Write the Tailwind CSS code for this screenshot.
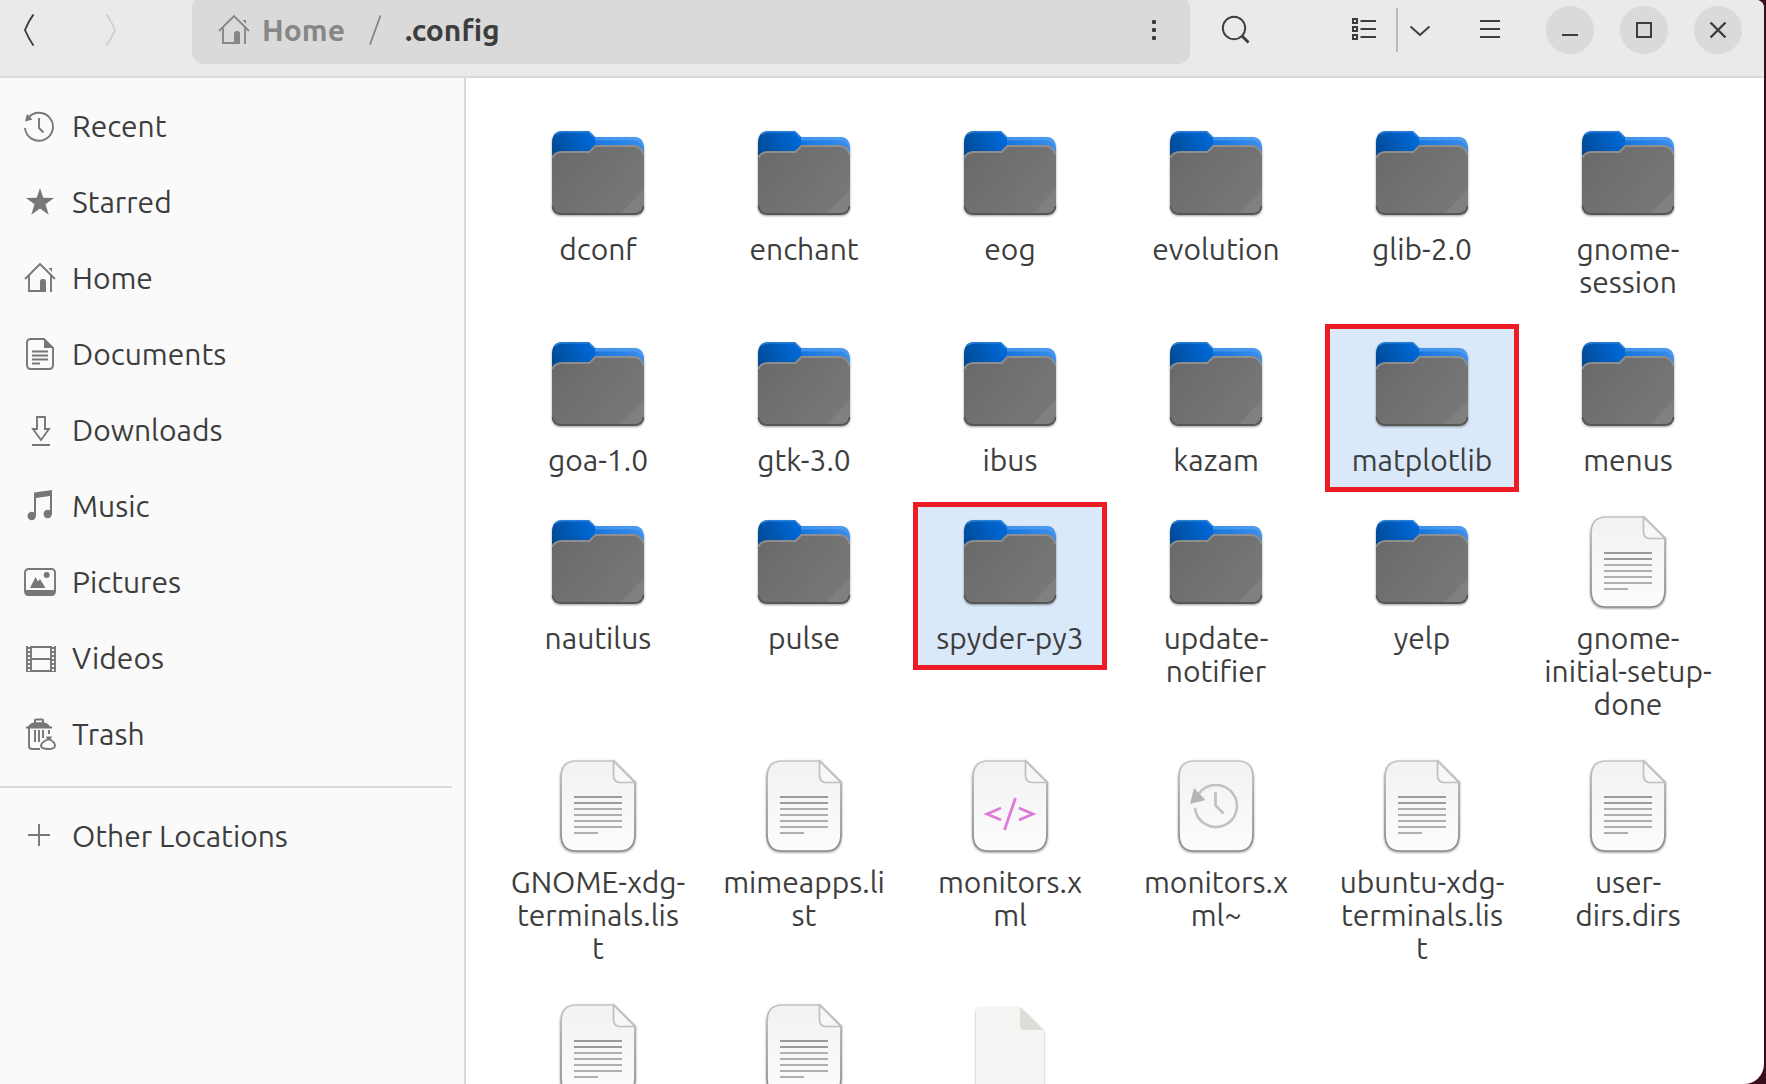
<!DOCTYPE html>
<html lang="en">
<head>
<meta charset="utf-8">
<title>.config</title>
<script src="https://cdn.jsdelivr.net/npm/@tailwindcss/browser@4"></script>
</head>
<body class="h-screen overflow-hidden bg-[#3a0d1a] pr-[2px] font-['Ubuntu','Noto_Sans',sans-serif] text-[30px] text-[#3d3d3d]">

<svg class="absolute h-0 w-0" aria-hidden="true">
  <defs>
    <linearGradient id="front" x1="0" y1="0" x2="1" y2="0.6"><stop offset="0" stop-color="#696969"/><stop offset="1" stop-color="#777777"/></linearGradient>
    <linearGradient id="tab" x1="0" y1="0.6" x2="0.9" y2="0.2"><stop offset="0" stop-color="#004a94"/><stop offset="1" stop-color="#0068d6"/></linearGradient>
    <linearGradient id="rim" x1="0" y1="0" x2="1" y2="0"><stop offset="0.4" stop-color="#1273da"/><stop offset="1" stop-color="#3a8eee"/></linearGradient>
    <linearGradient id="paper" x1="0" y1="0" x2="0" y2="1"><stop offset="0" stop-color="#f2f2f2"/><stop offset="1" stop-color="#fcfcfc"/></linearGradient>
    <linearGradient id="edge" x1="0" y1="0" x2="0" y2="1"><stop offset="0" stop-color="#c4c4c4"/><stop offset="0.4" stop-color="#a4a4a4"/><stop offset="1" stop-color="#8a8a8a"/></linearGradient>
    <filter id="shade" x="-10%" y="-10%" width="120%" height="125%"><feDropShadow dx="0" dy="1" stdDeviation="1.3" flood-color="#000" flood-opacity="0.38"/></filter>
  </defs>
  <symbol id="folder" viewBox="0 0 96 96">
    <g filter="url(#shade)">
      <path d="M2 40V22Q2 12 12 12H84Q94 12 94 24V40Z" fill="url(#rim)"/>
      <path d="M45 12H84Q92 13 93.500 22Q90 15.500 84 15.500H45Z" fill="#5aa5f5" opacity=".6"/>
      <path d="M2 42V18Q2 6 13 6H38Q39 6 40 7L45 12V26H40V42Z" fill="url(#tab)"/>
      <path d="M5 9.500Q8 6.800 13 6.800H38.500L44.500 12.800" fill="none" stroke="#2c80d6" stroke-width="1.500"/>
      <path d="M2 34Q3 26 13 26H39L45 20H84Q93 21 94 30V80Q94 90 84 90H12Q2 90 2 80Z" fill="url(#front)"/>
      <path d="M2.500 33Q4 27 13 27H39.500L45.500 21H84Q92 22 93.500 30" fill="none" stroke="#8e8e8e" stroke-width="1.800"/>
      <path d="M94 64V80Q94 89 85 89H70Z" fill="#fff" opacity=".07"/>
      <path d="M2.500 81Q3 89 12 89H84Q93 89 93.500 81" fill="none" stroke="#565656" stroke-width="1.800"/>
    </g>
  </symbol>
  <symbol id="sheet" viewBox="0 0 96 96">
    <path filter="url(#shade)" d="M11 20Q11 3 26 3H64L85 24V76Q85 93 70 93H26Q11 93 11 76Z" fill="url(#paper)" stroke="url(#edge)" stroke-width="1.700"/>
    <path d="M63.500 3V17Q63.500 24.500 70 24.500H85Z" fill="#f8f7f6" stroke="#bfbfbf" stroke-width="1.700"/>
  </symbol>
  <symbol id="text" viewBox="0 0 96 96">
    <use href="#sheet"/>
    <path d="M24 39H72M24 45H72" stroke="#9b9b9b" stroke-width="2"/>
    <path d="M24 51H72M24 57H72M24 63H72M24 69H72M24 75H48" stroke="#afafaf" stroke-width="2"/>
  </symbol>
  <symbol id="code" viewBox="0 0 96 96">
    <use href="#sheet"/>
    <path d="M39 50L25 56L39 62M57 50L71 56L57 62M53.500 40L42.500 72" fill="none" stroke="#e07ad8" stroke-width="2.800"/>
  </symbol>
  <symbol id="backup" viewBox="0 0 96 96">
    <path filter="url(#shade)" d="M11 20Q11 3 26 3H70Q85 3 85 20V76Q85 93 70 93H26Q11 93 11 76Z" fill="url(#paper)" stroke="url(#edge)" stroke-width="1.700"/>
    <path d="M31 35.500A21 21 0 1 1 27 50" fill="none" stroke="#c2c2c2" stroke-width="2.600"/>
    <path d="M47.500 34V47.500L55.500 55.500" fill="none" stroke="#c2c2c2" stroke-width="2.800"/>
    <path d="M26 30L22 46L37.500 42Z" fill="#b5b5b5"/>
  </symbol>
  <symbol id="blank" viewBox="0 0 96 96">
    <path filter="url(#shade)" d="M14 10Q14 5 19 5H58L82 29V91H14Z" fill="#f5f4f2"/>
    <path d="M58 5L82 28H63Q58 28 58 23Z" fill="#dddcd9"/>
  </symbol>

  <symbol id="home" viewBox="0 0 32 32">
    <path d="M1 17L16 2L31 17M5 14V29H21M27 14V30" fill="none" stroke="currentColor" stroke-width="1.900"/>
    <path d="M16 30V19.500Q16 17 18.500 17H19.500Q22 17 22 19.500V30ZM24.500 6H28V10Z" fill="currentColor"/>
  </symbol>
  <symbol id="recent" viewBox="0 0 32 32">
    <path d="M4 8A14 14 0 1 1 1 18M15 8V18L19.500 22.500" fill="none" stroke="currentColor" stroke-width="1.900"/>
    <path d="M3 4L1 11.500L8.500 9.500Z" fill="currentColor"/>
  </symbol>
  <symbol id="star" viewBox="0 0 32 32"><path d="M16 2.300L19.300 11.800L30 12L21.500 18.300L24.700 28.700L16 22.500L7.300 28.700L10.500 18.300L2 12L12.700 11.800Z" fill="currentColor"/></symbol>
  <symbol id="document" viewBox="0 0 32 32">
    <path d="M6 1H20L29 10V27Q29 31 25 31H7Q3 31 3 27V5Q3 1 7 1M8 13.500H24M8 17.500H24M8 21.500H24M8 25.500H16" fill="none" stroke="currentColor" stroke-width="1.900"/>
    <path d="M20 1V10H29Z" fill="currentColor"/>
  </symbol>
  <symbol id="download" viewBox="0 0 32 32"><path d="M13 3H21V15H25L17 26L9 15H13ZM8 31H26" fill="none" stroke="currentColor" stroke-width="1.900"/></symbol>
  <symbol id="music" viewBox="0 0 32 32">
    <path d="M10 2.500L28 0V24H26V6L12 8V26H10Z" fill="currentColor"/><circle cx="7.700" cy="26" r="4.200" fill="currentColor"/><circle cx="23.700" cy="24" r="4.200" fill="currentColor"/>
  </symbol>
  <symbol id="picture" viewBox="0 0 32 32">
    <rect x="1" y="3" width="30" height="26" rx="3.500" fill="none" stroke="currentColor" stroke-width="1.900"/>
    <path d="M1 24H31V26Q31 30 27 30H5Q1 30 1 26ZM6 22L11.500 11L14 15.500L16 13L21.500 22Z" fill="currentColor"/><circle cx="22.700" cy="9" r="3" fill="currentColor"/>
  </symbol>
  <symbol id="video" viewBox="0 0 32 32">
    <path d="M3 4V30M31 4V30M7 4V30M27 4V30M7 5H27M7 29H27M7 17H27" fill="none" stroke="currentColor" stroke-width="1.900"/>
    <path d="M5 5V30M29 5V30" fill="none" stroke="currentColor" stroke-width="3" stroke-dasharray="2 2"/>
  </symbol>
  <symbol id="trash" viewBox="0 0 32 32">
    <path d="M2 8.500H4Q6 5 10 4.500V2Q10 0.500 12 0.500H18Q20 0.500 20 2V4.500Q24 5 26 8.500H28V10.500H2ZM12 2.500V4.200H18V2.500Z" fill="currentColor" fill-rule="evenodd"/>
    <path d="M5 10V28Q5 31 8 31H16M11 12V24M15 12V24M19 12V20M25 12V16" fill="none" stroke="currentColor" stroke-width="1.900"/>
    <path d="M22 18.500H28L26.500 22H23.500Z" fill="currentColor"/>
    <path d="M23.500 21.500Q17 24.500 17 28Q17.500 31 24.500 31Q31 31 31 27.500Q31 24.500 26 21.500Z" fill="none" stroke="currentColor" stroke-width="1.900"/>
  </symbol>
  <symbol id="plus" viewBox="0 0 32 32"><path d="M4 15H26M15 4V26" stroke="currentColor" stroke-width="1.900"/></symbol>
</svg>

<div class="flex h-full flex-col overflow-hidden rounded-tr-lg rounded-br-[20px] bg-white">
  <header class="shrink-0 border-b-2 border-[#dadada] bg-[#eaeaea] pb-4">
    <div class="flex h-[60px] items-center">
      <nav class="flex w-[192px] shrink-0 gap-[34px] pl-[5px]" aria-label="History">
        <button class="flex size-12 items-center justify-center" aria-label="Back"><svg class="size-8" viewBox="0 0 32 32"><path d="M20.500 .5Q16 6.500 12 16Q16 25.500 20.500 31.500" fill="none" stroke="#3d3d3d" stroke-width="1.900"/></svg></button>
        <button class="flex size-12 items-center justify-center" aria-label="Forward" disabled><svg class="size-8" viewBox="0 0 32 32"><path d="M11.500 .5Q16 6.500 20 16Q16 25.500 11.500 31.500" fill="none" stroke="#cfcfcf" stroke-width="1.900"/></svg></button>
      </nav>
      <div class="flex h-[68px] flex-1 shrink-0 items-center rounded-xl bg-[#dadada] pr-3 pl-[26px] font-bold">
        <a href="#" class="flex items-center gap-3 text-[#878787]"><svg class="size-8"><use href="#home"/></svg>Home</a>
        <svg class="mx-[22px] h-8 w-4" viewBox="0 0 16 32" aria-hidden="true"><path d="M13.500 1.500L3 30.500" stroke="#878787" stroke-width="1.900"/></svg>
        <a href="#">.config</a>
        <button class="ml-auto flex size-12 items-center justify-center" aria-label="Folder menu"><svg class="size-8" viewBox="0 0 32 32" fill="#3d3d3d"><rect x="14" y="6" width="4" height="4" rx="1"/><rect x="14" y="14" width="4" height="4" rx="1"/><rect x="14" y="22" width="4" height="4" rx="1"/></svg></button>
      </div>
      <button class="ml-[22px] flex size-12 shrink-0 items-center justify-center" aria-label="Search"><svg class="size-8" viewBox="0 0 32 32" fill="none" stroke="#3d3d3d"><circle cx="14" cy="14" r="11.200" stroke-width="1.900"/><path d="M22 22L28.500 28.500" stroke-width="2.800"/></svg></button>
      <button class="ml-20 flex size-12 shrink-0 items-center justify-center" aria-label="List view"><svg class="size-8" viewBox="0 0 32 32" fill="none" stroke="#3d3d3d" stroke-width="2"><path d="M5 5H9V9H5ZM5 13H9V17H5ZM5 21H9V25H5ZM12.500 7H28M12.500 15H28M12.500 23H28"/></svg></button>
      <div class="ml-2 h-11 w-[2px] shrink-0 bg-[#b8b8b8]"></div>
      <button class="flex h-12 w-11 shrink-0 items-center justify-center" aria-label="View options"><svg class="size-8" viewBox="0 0 32 32" fill="none" stroke="#3d3d3d" stroke-width="2"><path d="M6.500 12.500L16 21L25.500 12.500"/></svg></button>
      <button class="ml-6 flex size-12 shrink-0 items-center justify-center" aria-label="Main menu"><svg class="size-8" viewBox="0 0 32 32" stroke="#3d3d3d" stroke-width="2"><path d="M6 7H26M6 15H26M6 23H26"/></svg></button>
      <div class="ml-8 flex shrink-0 gap-[26px] pr-[22px]">
        <button class="flex size-12 items-center justify-center rounded-full bg-[#dadada]" aria-label="Minimize"><svg class="size-8" viewBox="0 0 32 32" stroke="#3d3d3d" stroke-width="2"><path d="M8 21H24"/></svg></button>
        <button class="flex size-12 items-center justify-center rounded-full bg-[#dadada]" aria-label="Maximize"><svg class="size-8" viewBox="0 0 32 32" fill="none" stroke="#3d3d3d" stroke-width="2"><path d="M9 9H23V23H9Z"/></svg></button>
        <button class="flex size-12 items-center justify-center rounded-full bg-[#dadada]" aria-label="Close"><svg class="size-8" viewBox="0 0 32 32" stroke="#3d3d3d" stroke-width="2.400"><path d="M8.500 8.500L23.500 23.500M23.500 8.500L8.500 23.500"/></svg></button>
      </div>
    </div>
  </header>

  <div class="flex min-h-0 flex-1">
    <aside class="w-[466px] shrink-0 border-r-2 border-[#dadada] bg-[#fafafa] pt-[10px]">
      <nav class="leading-[33px]" aria-label="Places">
        <a href="#" class="flex h-[76px] items-center gap-4 pl-6"><svg class="size-8 text-[#777]"><use href="#recent"/></svg>Recent</a>
        <a href="#" class="flex h-[76px] items-center gap-4 pl-6"><svg class="size-8 text-[#777]"><use href="#star"/></svg>Starred</a>
        <a href="#" class="flex h-[76px] items-center gap-4 pl-6"><svg class="size-8 text-[#777]"><use href="#home"/></svg>Home</a>
        <a href="#" class="flex h-[76px] items-center gap-4 pl-6"><svg class="size-8 text-[#777]"><use href="#document"/></svg>Documents</a>
        <a href="#" class="flex h-[76px] items-center gap-4 pl-6"><svg class="size-8 text-[#777]"><use href="#download"/></svg>Downloads</a>
        <a href="#" class="flex h-[76px] items-center gap-4 pl-6"><svg class="size-8 text-[#777]"><use href="#music"/></svg>Music</a>
        <a href="#" class="flex h-[76px] items-center gap-4 pl-6"><svg class="size-8 text-[#777]"><use href="#picture"/></svg>Pictures</a>
        <a href="#" class="flex h-[76px] items-center gap-4 pl-6"><svg class="size-8 text-[#777]"><use href="#video"/></svg>Videos</a>
        <a href="#" class="flex h-[76px] items-center gap-4 pl-6"><svg class="size-8 text-[#777]"><use href="#trash"/></svg>Trash</a>
        <hr class="mt-[14px] mr-3 mb-[10px] border-t-2 border-[#dadada]">
        <a href="#" class="flex h-[76px] items-center gap-4 pl-6"><svg class="size-8 text-[#777]"><use href="#plus"/></svg>Other Locations</a>
      </nav>
    </aside>

    <main class="min-w-0 flex-1 overflow-hidden">
      <div class="grid grid-cols-6 items-start gap-x-3 gap-y-[10px] pt-[35px] pr-[39px] pl-[35px] text-center leading-[33px] whitespace-nowrap">
        <button class="flex flex-col items-center gap-3 pt-3 pb-[15px]"><svg class="size-24"><use href="#folder"/></svg><span>dconf</span></button>
        <button class="flex flex-col items-center gap-3 pt-3 pb-[15px]"><svg class="size-24"><use href="#folder"/></svg><span>enchant</span></button>
        <button class="flex flex-col items-center gap-3 pt-3 pb-[15px]"><svg class="size-24"><use href="#folder"/></svg><span>eog</span></button>
        <button class="flex flex-col items-center gap-3 pt-3 pb-[15px]"><svg class="size-24"><use href="#folder"/></svg><span>evolution</span></button>
        <button class="flex flex-col items-center gap-3 pt-3 pb-[15px]"><svg class="size-24"><use href="#folder"/></svg><span>glib-2.0</span></button>
        <button class="flex flex-col items-center gap-3 pt-3 pb-[15px]"><svg class="size-24"><use href="#folder"/></svg><span>gnome-<br>session</span></button>

        <button class="flex flex-col items-center gap-3 pt-3 pb-[15px]"><svg class="size-24"><use href="#folder"/></svg><span>goa-1.0</span></button>
        <button class="flex flex-col items-center gap-3 pt-3 pb-[15px]"><svg class="size-24"><use href="#folder"/></svg><span>gtk-3.0</span></button>
        <button class="flex flex-col items-center gap-3 pt-3 pb-[15px]"><svg class="size-24"><use href="#folder"/></svg><span>ibus</span></button>
        <button class="flex flex-col items-center gap-3 pt-3 pb-[15px]"><svg class="size-24"><use href="#folder"/></svg><span>kazam</span></button>
        <button class="relative flex flex-col items-center gap-3 rounded-[20px] bg-[#d9e9fa] pt-3 pb-[15px]"><span class="absolute inset-0 border-5 border-[#ed1c24]"></span><svg class="size-24"><use href="#folder"/></svg><span>matplotlib</span></button>
        <button class="flex flex-col items-center gap-3 pt-3 pb-[15px]"><svg class="size-24"><use href="#folder"/></svg><span>menus</span></button>

        <button class="flex flex-col items-center gap-3 pt-3 pb-[15px]"><svg class="size-24"><use href="#folder"/></svg><span>nautilus</span></button>
        <button class="flex flex-col items-center gap-3 pt-3 pb-[15px]"><svg class="size-24"><use href="#folder"/></svg><span>pulse</span></button>
        <button class="relative flex flex-col items-center gap-3 rounded-[20px] bg-[#d9e9fa] pt-3 pb-[15px]"><span class="absolute inset-0 border-5 border-[#ed1c24]"></span><svg class="size-24"><use href="#folder"/></svg><span>spyder-py3</span></button>
        <button class="flex flex-col items-center gap-3 pt-3 pb-[15px]"><svg class="size-24"><use href="#folder"/></svg><span>update-<br>notifier</span></button>
        <button class="flex flex-col items-center gap-3 pt-3 pb-[15px]"><svg class="size-24"><use href="#folder"/></svg><span>yelp</span></button>
        <button class="flex flex-col items-center gap-3 pt-3 pb-[15px]"><svg class="size-24"><use href="#text"/></svg><span>gnome-<br>initial-setup-<br>done</span></button>

        <button class="flex flex-col items-center gap-3 pt-3 pb-[15px]"><svg class="size-24"><use href="#text"/></svg><span>GNOME-xdg-<br>terminals.lis<br>t</span></button>
        <button class="flex flex-col items-center gap-3 pt-3 pb-[15px]"><svg class="size-24"><use href="#text"/></svg><span>mimeapps.li<br>st</span></button>
        <button class="flex flex-col items-center gap-3 pt-3 pb-[15px]"><svg class="size-24"><use href="#code"/></svg><span>monitors.x<br>ml</span></button>
        <button class="flex flex-col items-center gap-3 pt-3 pb-[15px]"><svg class="size-24"><use href="#backup"/></svg><span>monitors.x<br>ml~</span></button>
        <button class="flex flex-col items-center gap-3 pt-3 pb-[15px]"><svg class="size-24"><use href="#text"/></svg><span>ubuntu-xdg-<br>terminals.lis<br>t</span></button>
        <button class="flex flex-col items-center gap-3 pt-3 pb-[15px]"><svg class="size-24"><use href="#text"/></svg><span>user-<br>dirs.dirs</span></button>

        <button class="flex flex-col items-center pt-3" aria-label="Text file"><svg class="size-24"><use href="#text"/></svg></button>
        <button class="flex flex-col items-center pt-3" aria-label="Text file"><svg class="size-24"><use href="#text"/></svg></button>
        <button class="flex flex-col items-center pt-3" aria-label="File"><svg class="size-24"><use href="#blank"/></svg></button>
      </div>
    </main>
  </div>
</div>
</body>
</html>
